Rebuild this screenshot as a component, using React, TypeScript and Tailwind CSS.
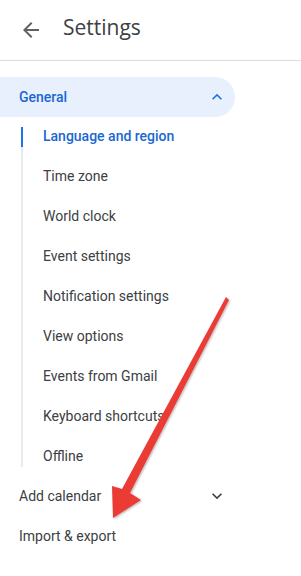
import React from "react";

const items = [
  "Language and region",
  "Time zone",
  "World clock",
  "Event settings",
  "Notification settings",
  "View options",
  "Events from Gmail",
  "Keyboard shortcuts",
  "Offline",
];

function Chevron({ up }: { up?: boolean }) {
  return (
    <svg width="20" height="20" viewBox="0 0 24 24" fill="currentColor" className={up ? "rotate-180" : ""}>
      <path d="M16.59 8.59L12 13.17 7.41 8.59 6 10l6 6 6-6z" />
    </svg>
  );
}

export default function App() {
  return (
    <div className="relative w-[301px] h-[576px] overflow-hidden bg-white text-[#3c4043]" style={{ fontFamily: "Roboto, 'Liberation Sans', sans-serif" }}>
      <div className="flex h-[61px] items-center border-b border-[#dadce0]">
        <div className="ml-[19px] flex h-6 w-6 items-center justify-center text-[#5f6368]">
          <svg width="24" height="24" viewBox="0 0 24 24" fill="currentColor">
            <path d="M20 11H7.83l5.59-5.59L12 4l-8 8 8 8 1.41-1.41L7.83 13H20v-2z" />
          </svg>
        </div>
        <div className="ml-[20px] -mt-[4px] text-[21px] text-[#3c4043]" style={{ fontFamily: "'Open Sans', sans-serif" }}>
          Settings
        </div>
      </div>
      <div className="mt-[16px] flex h-10 w-[235px] items-center justify-between rounded-r-full bg-[#e8f0fe] pl-[19px] pr-[8px] text-[14px] font-medium text-[#1967d2]">
        <span>General</span>
        <span className="text-[#1a73e8]"><Chevron up /></span>
      </div>
      <div className="relative ml-[21px] mt-[10px] flex h-[340px] flex-col border-l-2 border-[#e8eaed]">
        <div className="absolute -left-[2px] top-0 h-5 w-[2px] bg-[#1a73e8]" />
        <div className="-mt-[11px] flex flex-col">
          {items.map((t, i) => (
            <div
              key={t}
              className={`flex h-10 items-center pl-[20px] text-[14px] whitespace-nowrap ${i === 0 ? "font-medium text-[#1967d2]" : "text-[#3c4043]"}`}
            >
              {t}
            </div>
          ))}
        </div>
      </div>
      <div className="mt-[9px] flex h-10 w-[235px] items-center justify-between pl-[19px] pr-[8px] text-[14px] text-[#3c4043]">
        <span>Add calendar</span>
        <span className="text-[#3c4043]"><Chevron /></span>
      </div>
      <div className="flex h-10 items-center pl-[19px] text-[14px] text-[#3c4043]">Import &amp; export</div>
      <svg className="pointer-events-none absolute left-0 top-0" width="301" height="576" viewBox="0 0 301 576">
        <defs>
          <filter id="sh" x="-20%" y="-20%" width="140%" height="140%">
            <feDropShadow dx="1" dy="1" stdDeviation="1" floodColor="#000" floodOpacity="0.3" />
          </filter>
        </defs>
        <polygon
          points="226,297 229,300 130,493 141,500 113,518 112,486 122,489"
          fill="#ea3a36"
          filter="url(#sh)"
        />
      </svg>
    </div>
  );
}
